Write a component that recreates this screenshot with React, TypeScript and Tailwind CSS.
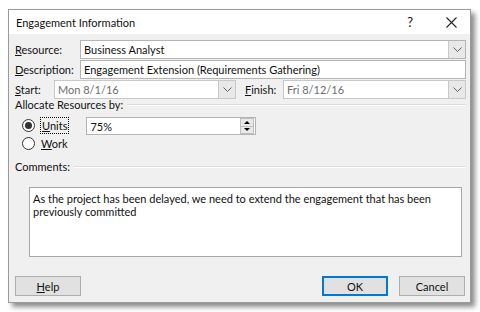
import React from "react";

function Chevron() {
  return (
    <svg width="9" height="5" viewBox="0 0 9 5" fill="none">
      <path d="M0.5 0.5 L4.5 4.5 L8.5 0.5" stroke="#606060" strokeWidth="1" />
    </svg>
  );
}

function DropBtn() {
  return (
    <div className="flex h-full w-[17px] items-center justify-center border-l border-[#c8c8c8] bg-[#e8e8e8]">
      <Chevron />
    </div>
  );
}

function U({ children }: { children: React.ReactNode }) {
  return <span className="underline underline-offset-1">{children}</span>;
}

function GroupHeading({ children }: { children: React.ReactNode }) {
  return (
    <div className="flex items-center gap-1">
      <span>{children}</span>
      <div className="flex-1 border-t border-[#dcdcdc] border-b-white border-b" />
    </div>
  );
}

function Button({ children, primary }: { children: React.ReactNode; primary?: boolean }) {
  return (
    <div
      className={
        "flex h-[20px] w-[66px] items-center justify-center bg-[#e1e1e1] " +
        (primary ? "border-2 border-[#0078d7]" : "border border-[#adadad]")
      }
    >
      {children}
    </div>
  );
}

export default function App() {
  return (
    <div className="h-[312px] w-[480px] bg-white font-['Lato',sans-serif] text-[11px] leading-none text-[#111]">
      <div className="ml-[8px] pt-[9px]">
        <div className="flex h-[294px] w-[463px] flex-col border border-[#9a9a9a] bg-[#f0f0f0] shadow-[4px_4px_5px_rgba(0,0,0,0.45)]">
          {/* title bar */}
          <div className="flex h-[24px] items-center bg-white pl-[7px]">
            <span className="flex-1">Engagement Information</span>
            <span className="mr-[33px] text-[13px]">?</span>
            <svg width="11" height="11" viewBox="0 0 11 11" className="mr-[13px]">
              <path d="M0.5 0.5 L10.5 10.5 M10.5 0.5 L0.5 10.5" stroke="#222" strokeWidth="1.1" />
            </svg>
          </div>

          <div className="flex flex-1 flex-col pl-[6px] pr-[4px] pt-[6px]">
            {/* Resource */}
            <div className="flex h-[19px] items-center">
              <span className="w-[65px]"><U>R</U>esource:</span>
              <div className="flex h-full flex-1 items-center border border-[#b4b4b4] bg-white">
                <span className="flex-1 pl-[3px]">Business Analyst</span>
                <DropBtn />
              </div>
            </div>
            {/* Description */}
            <div className="mt-[1px] flex h-[19px] items-center">
              <span className="w-[65px]"><U>D</U>escription:</span>
              <div className="flex h-full flex-1 items-center border border-[#b4b4b4] bg-white pl-[3px]">
                Engagement Extension (Requirements Gathering)
              </div>
            </div>
            {/* Start / Finish */}
            <div className="mt-[1px] flex h-[19px] items-center">
              <span className="w-[39px]"><U>S</U>tart:</span>
              <div className="flex h-full w-[182px] items-center border border-[#c8c8c8] bg-white">
                <span className="flex-1 pl-[3px] text-[#6d6d6d]">Mon 8/1/16</span>
                <DropBtn />
              </div>
              <span className="ml-[9px] w-[38px]"><U>F</U>inish:</span>
              <div className="flex h-full flex-1 items-center border border-[#c8c8c8] bg-white">
                <span className="flex-1 pl-[3px] text-[#6d6d6d]">Fri 8/12/16</span>
                <DropBtn />
              </div>
            </div>

            {/* Allocate */}
            <div className="mt-0">
              <GroupHeading>Allocate Resources by:</GroupHeading>
            </div>
            <div className="mt-[7px] flex items-start pl-[7px]">
              <div className="flex flex-col gap-[2px]">
                <div className="flex h-[17px] items-center">
                  <div className="flex h-[13px] w-[13px] items-center justify-center rounded-full border border-[#333] bg-white">
                    <div className="h-[7px] w-[7px] rounded-full bg-[#333]" />
                  </div>
                  <span className="ml-[5px] border border-dotted border-black px-[1px] py-[2px]"><U>U</U>nits</span>
                </div>
                <div className="flex h-[15px] items-center">
                  <div className="h-[13px] w-[13px] rounded-full border border-[#333] bg-white" />
                  <span className="ml-[6px]"><U>W</U>ork</span>
                </div>
              </div>
              <div className="ml-[17px] flex h-[18px] w-[170px] items-center border border-[#b4b4b4] bg-white">
                <span className="flex-1 pl-[3px]">75%</span>
                <div className="mr-[1px] flex h-[16px] w-[14px] flex-col border border-[#c0c0c0] bg-[#e8e8e8]">
                  <div className="flex flex-1 items-center justify-center border-b border-[#c0c0c0]">
                    <div className="h-0 w-0 border-x-[3px] border-b-[3px] border-x-transparent border-b-black" />
                  </div>
                  <div className="flex flex-1 items-center justify-center">
                    <div className="h-0 w-0 border-x-[3px] border-t-[3px] border-x-transparent border-t-black" />
                  </div>
                </div>
              </div>
            </div>

            {/* Comments */}
            <div className="mt-[10px]">
              <GroupHeading>Comments:</GroupHeading>
            </div>
            <div className="ml-[14px] mr-[4px] mt-[15px] h-[70px] border border-[#a8a8a8] bg-white px-[3px] pt-[4px] leading-[13px]">
              As the project has been delayed, we need to extend the engagement that has been previously committed
            </div>

            {/* Buttons */}
            <div className="mt-[19px] flex items-center pr-[1px]">
              <Button><span><U>H</U>elp</span></Button>
              <div className="flex-1" />
              <Button primary>OK</Button>
              <div className="ml-[11px]">
                <Button>Cancel</Button>
              </div>
            </div>
          </div>
        </div>
      </div>
    </div>
  );
}
